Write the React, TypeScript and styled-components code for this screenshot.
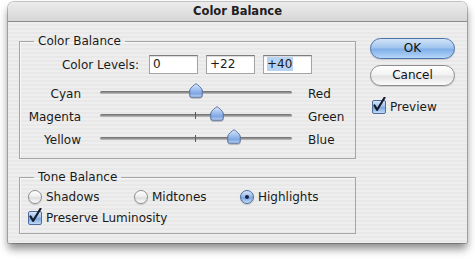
import React from 'react';
import styled, { createGlobalStyle } from 'styled-components';

// Dialog data
//----------------------------------------------
type Slider = {
  left: string;
  right: string;
  value: number;
};

const levels = ['0', '+22', '+40'];

const sliders: Array<Slider> = [
  { left: 'Cyan', right: 'Red', value: 0 },
  { left: 'Magenta', right: 'Green', value: 22 },
  { left: 'Yellow', right: 'Blue', value: 40 },
];

const tones = [
  { label: 'Shadows', checked: false },
  { label: 'Midtones', checked: false },
  { label: 'Highlights', checked: true },
];

const TRACK = 192;

const CheckMark: React.FC = () => (
  <svg width="14" height="16" viewBox="0 0 14 16">
    <path
      d="M2.5 8.5 L5.2 12.8 L12.5 0.8"
      fill="none"
      stroke="#141c2c"
      strokeWidth="2.2"
      strokeLinecap="round"
      strokeLinejoin="round"
    />
  </svg>
);

const Check: React.FC<{ label: string }> = (props) => (
  <CheckRow>
    <CheckBox>
      <CheckMark />
    </CheckBox>
    <span>{props.label}</span>
  </CheckRow>
);

const Thumb: React.FC = () => (
  <svg width="14" height="15" viewBox="0 0 14 15">
    <defs>
      <linearGradient id="thumbFill" x1="0" y1="0" x2="0" y2="1">
        <stop offset="0" stopColor="#dbe8fa" />
        <stop offset="0.55" stopColor="#93b6ea" />
        <stop offset="0.75" stopColor="#7ea6e2" />
        <stop offset="1" stopColor="#c4dbf7" />
      </linearGradient>
    </defs>
    <path
      d="M7 0.7 C8.5 1.5 12.8 5 13.2 7 L13.2 12.2 Q13.2 14.2 11.2 14.2 L2.8 14.2 Q0.8 14.2 0.8 12.2 L0.8 7 C1.2 5 5.5 1.5 7 0.7 Z"
      fill="url(#thumbFill)"
      stroke="#5a74a6"
      strokeWidth="1"
    />
  </svg>
);

const App: React.FC = () => {
  return (
    <Page>
      <GlobalStyle />
      <Window>
        <TitleBar>Color Balance</TitleBar>
        <Body>
          <LeftColumn>
            <Group height={125} pad={7}>
              <Legend>Color Balance</Legend>
              <LevelsRow>
                <LevelsLabel>Color Levels:</LevelsLabel>
                {levels.map((level, i) => (
                  <LevelBox key={level}>
                    {i === levels.length - 1 ? <Selected>{level}</Selected> : level}
                  </LevelBox>
                ))}
              </LevelsRow>
              <Sliders>
                {sliders.map((slider) => (
                  <SliderRow key={slider.left}>
                    <SliderLabel>{slider.left}</SliderLabel>
                    <Track>
                      <Tick />
                      <ThumbWrap
                        style={{ left: TRACK / 2 + (slider.value / 100) * (TRACK / 2) - 7 }}
                      >
                        <Thumb />
                      </ThumbWrap>
                    </Track>
                    <span>{slider.right}</span>
                  </SliderRow>
                ))}
              </Sliders>
            </Group>
            <Group height={64} pad={3}>
              <Legend>Tone Balance</Legend>
              <ToneRow>
                {tones.map((tone) => (
                  <RadioItem key={tone.label}>
                    <Radio checked={tone.checked} />
                    <span>{tone.label}</span>
                  </RadioItem>
                ))}
              </ToneRow>
              <ToneCheck>
                <Check label="Preserve Luminosity" />
              </ToneCheck>
            </Group>
          </LeftColumn>
          <RightColumn>
            <Button primary>OK</Button>
            <Button>Cancel</Button>
            <PreviewCheck>
              <Check label="Preview" />
            </PreviewCheck>
          </RightColumn>
        </Body>
      </Window>
    </Page>
  );
};

const GlobalStyle = createGlobalStyle`
  html, body {
    margin: 0;
    padding: 0;
    background: #ffffff;
  }
  body {
    font-family: "DejaVu Sans", "Liberation Sans", sans-serif;
    font-size: 12px;
    color: #1a1a1a;
  }
`;

const Page = styled.div`
  width: 475px;
  height: 261px;
  box-sizing: border-box;
  padding: 2px 8px 0 8px;
  overflow: hidden;
`;

const Window = styled.div`
  width: 459px;
  height: 241px;
  display: flex;
  flex-direction: column;
  border-radius: 6px 6px 2px 2px;
  overflow: hidden;
  background: repeating-linear-gradient(
    to bottom,
    #eeeeee 0px,
    #eeeeee 2px,
    #e8e8e8 2px,
    #e8e8e8 4px
  );
  box-shadow: 0 0 0 1px rgba(0, 0, 0, 0.22), 0 6px 9px rgba(0, 0, 0, 0.45);
`;

const TitleBar = styled.div`
  height: 19px;
  flex: none;
  border-bottom: 1px solid #8c8c8c;
  background: linear-gradient(to bottom, #ececec, #d6d6d6);
  text-align: center;
  font-weight: 700;
  font-size: 11.5px;
  line-height: 19px;
  color: #202020;
`;

const Body = styled.div`
  display: flex;
  gap: 14px;
  padding: 12px 0 0 11px;
`;

const LeftColumn = styled.div`
  width: 337px;
  display: flex;
  flex-direction: column;
  gap: 11px;
`;

const Group = styled.fieldset<{ height: number; pad: number }>`
  margin: 0;
  padding: ${(p) => p.pad}px 0 0 0;
  min-width: 0;
  height: ${(p) => p.height}px;
  box-sizing: border-box;
  border: 1px solid #a6a6a6;
  box-shadow: inset 1px 1px 0 rgba(255, 255, 255, 0.6);
`;

const Legend = styled.legend`
  margin-left: 14px;
  padding: 0 4px;
  line-height: 14px;
  font-size: 12px;
`;

const LevelsRow = styled.div`
  display: flex;
  align-items: center;
  height: 19px;
`;

const LevelsLabel = styled.div`
  width: 119px;
  margin-right: 10px;
  text-align: right;
`;

const LevelBox = styled.div`
  width: 49px;
  height: 19px;
  box-sizing: border-box;
  margin-right: 8px;
  padding-left: 3px;
  border: 1px solid #a4a4a4;
  border-top-color: #7c7c7c;
  box-shadow: inset 0 1px 1px rgba(0, 0, 0, 0.15);
  background: #ffffff;
  line-height: 17px;
`;

const Selected = styled.span`
  background: #b7d3f2;
  padding-right: 1px;
`;

const Sliders = styled.div`
  margin-top: 8px;
`;

const SliderRow = styled.div`
  display: flex;
  align-items: center;
  height: 23px;
`;

const SliderLabel = styled.div`
  width: 61px;
  text-align: right;
`;

const Track = styled.div`
  position: relative;
  width: ${TRACK}px;
  height: 23px;
  margin: 0 16px 0 19px;

  &::before {
    content: '';
    position: absolute;
    left: 0;
    right: 0;
    top: 9px;
    height: 3px;
    border-radius: 2px;
    background: linear-gradient(to bottom, #6a6a6a, #9a9a9a 60%, #c4c4c4);
  }
`;

const Tick = styled.div`
  position: absolute;
  left: ${TRACK / 2 - 1}px;
  top: 7px;
  width: 1px;
  height: 7px;
  background: #5a5a5a;
`;

const ThumbWrap = styled.div`
  position: absolute;
  top: 1px;
  width: 14px;
  height: 15px;
  line-height: 0;
  filter: drop-shadow(0 1px 0.5px rgba(0, 0, 0, 0.25));
`;

const ToneRow = styled.div`
  display: grid;
  grid-template-columns: 106px 106px 106px;
  padding-left: 8px;
  height: 20px;
  align-items: center;
`;

const RadioItem = styled.div`
  display: flex;
  align-items: center;
  gap: 4px;
`;

const Radio = styled.div<{ checked?: boolean }>`
  position: relative;
  width: 14px;
  height: 14px;
  box-sizing: border-box;
  border-radius: 50%;
  border: 1px solid ${(p) => (p.checked ? '#4d6c9e' : '#8e8e8e')};
  background: ${(p) =>
    p.checked
      ? 'linear-gradient(to bottom, #d8e7fa, #8fb4e8 50%, #7aa5e1 55%, #c2daf7)'
      : 'linear-gradient(to bottom, #ffffff, #ececec 50%, #dedede 55%, #fbfbfb)'};
  box-shadow: 0 1px 1px rgba(0, 0, 0, 0.15);

  &::after {
    content: '';
    display: ${(p) => (p.checked ? 'block' : 'none')};
    position: absolute;
    left: 4px;
    top: 4px;
    width: 4px;
    height: 4px;
    border-radius: 50%;
    background: #16203a;
  }
`;

const ToneCheck = styled.div`
  padding: 1px 0 0 8px;
`;

const CheckRow = styled.div`
  display: flex;
  align-items: center;
  gap: 4px;
  height: 20px;
`;

const CheckBox = styled.div`
  position: relative;
  width: 14px;
  height: 14px;
  box-sizing: border-box;
  border: 1px solid #4f6d9c;
  border-radius: 2px;
  background: linear-gradient(to bottom, #d9e7f9, #95b9ea 50%, #7ea7e1 55%, #c0d9f6);

  svg {
    position: absolute;
    left: -1px;
    top: -4px;
  }
`;

const RightColumn = styled.div`
  width: 85px;
  display: flex;
  flex-direction: column;
  gap: 6px;
  padding-top: 4px;
`;

const Button = styled.div<{ primary?: boolean }>`
  height: 21px;
  box-sizing: border-box;
  border-radius: 11px;
  text-align: center;
  line-height: 19px;
  font-size: 12px;
  color: #111111;
  border: 1px solid ${(p) => (p.primary ? '#4e72a8' : '#8c8c8c')};
  background: ${(p) =>
    p.primary
      ? 'linear-gradient(to bottom, #d2e4f8, #9ec3ee 48%, #7eaee8 52%, #b4d6fa)'
      : 'linear-gradient(to bottom, #ffffff, #f2f2f2 48%, #e2e2e2 52%, #fbfbfb)'};
  box-shadow: 0 1px 1px rgba(0, 0, 0, 0.15);
`;

const PreviewCheck = styled.div`
  margin-top: 5px;
  padding-left: 2px;
`;

export default App;
